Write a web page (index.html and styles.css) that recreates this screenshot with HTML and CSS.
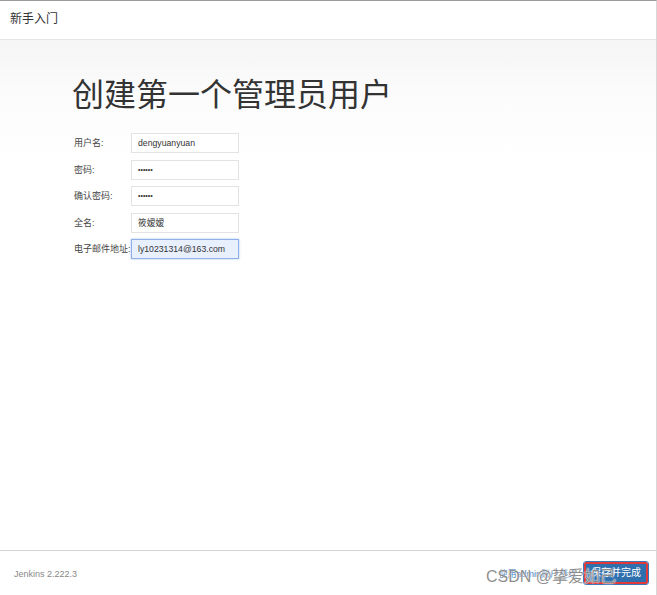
FILE: index.html
```html
<!DOCTYPE html>
<html lang="zh">
<head>
<meta charset="utf-8">
<title>新手入门</title>
<link rel="stylesheet" href="styles.css">
</head>
<body>
<div class="frame">
  <header class="topbar">新手入门</header>
  <main class="content">
    <h1 class="title">创建第一个管理员用户</h1>
    <form class="form">
      <label class="row"><span class="lbl">用户名:</span><span class="input">dengyuanyuan</span></label>
      <label class="row"><span class="lbl">密码:</span><span class="input dots">••••••</span></label>
      <label class="row"><span class="lbl">确认密码:</span><span class="input dots">••••••</span></label>
      <label class="row"><span class="lbl">全名:</span><span class="input">筱嫒嫒</span></label>
      <label class="row"><span class="lbl">电子邮件地址:</span><span class="input focus">ly10231314@163.com</span></label>
    </form>
  </main>
  <footer class="footer">
    <span class="version">Jenkins 2.222.3</span>
    <div class="actions">
      <a class="link">使用admin账户继续</a>
      <span class="btn">保存并完成</span>
    </div>
    <span class="watermark">CSDN @挚爱如己</span>
  </footer>
</div>
</body>
</html>
```
FILE: styles.css
```css
html, body {
  margin: 0;
  padding: 0;
  background: #fff;
}
body {
  font-family: "Liberation Sans", Arial, "Noto Sans CJK SC", sans-serif;
  color: #333;
}
.frame {
  width: 656px;
  height: 594px;
  border-top: 1px solid #9a9a9a;
  border-right: 1px solid #d8d8d8;
  display: flex;
  flex-direction: column;
  position: relative;
}
.topbar {
  height: 39px;
  box-sizing: border-box;
  border-bottom: 1px solid #e6e6e6;
  padding-left: 10px;
  font-size: 12px;
  line-height: 36px;
  color: #333;
}
.content {
  flex: 1;
  background: linear-gradient(#f5f5f5 0, #fbfbfb 50px, #fff 120px);
  padding: 35px 0 0 72px;
}
.title {
  margin: 0 0 18px 0;
  font-size: 32px;
  font-weight: normal;
  line-height: 40px;
  color: #333;
}
.form {
  display: flex;
  flex-direction: column;
  gap: 6.5px;
}
.row {
  display: flex;
  align-items: center;
}
.lbl {
  width: 57px;
  padding-left: 2px;
  font-size: 9px;
  color: #444;
  align-self: flex-start;
  padding-top: 3px;
}
.input {
  width: 108px;
  height: 20px;
  box-sizing: border-box;
  border: 1px solid #e3e3e3;
  background: #fff;
  font-size: 8.7px;
  line-height: 18px;
  padding-left: 6px;
  color: #333;
}
.dots {
  font-size: 7px;
}
.focus {
  border-color: #8eb0e6;
  background: #e8f0fe;
  box-shadow: 0 0 2px rgba(102, 150, 233, 0.6);
}
.footer {
  height: 44px;
  border-top: 1px solid #d4d4d4;
  display: flex;
  align-items: center;
  justify-content: space-between;
  padding: 0 8px 0 14px;
  position: relative;
}
.version {
  font-size: 9px;
  color: #888;
  margin-top: 2px;
}
.actions {
  display: flex;
  align-items: center;
  gap: 7px;
}
.link {
  font-size: 9px;
  color: #3a76b8;
}
.btn {
  background: #2f6fae;
  color: #fff;
  font-size: 10px;
  line-height: 18px;
  padding: 0 5px;
  border: 2px solid #e23838;
  border-radius: 2px;
  outline: 1px solid #3b78b8;
}
.watermark {
  position: absolute;
  left: 486px;
  top: 12px;
  font-size: 16px;
  color: rgba(120, 120, 120, 0.85);
  text-shadow: 0 0 2px #fff, 0 0 1px #fff;
  pointer-events: none;
}
```
